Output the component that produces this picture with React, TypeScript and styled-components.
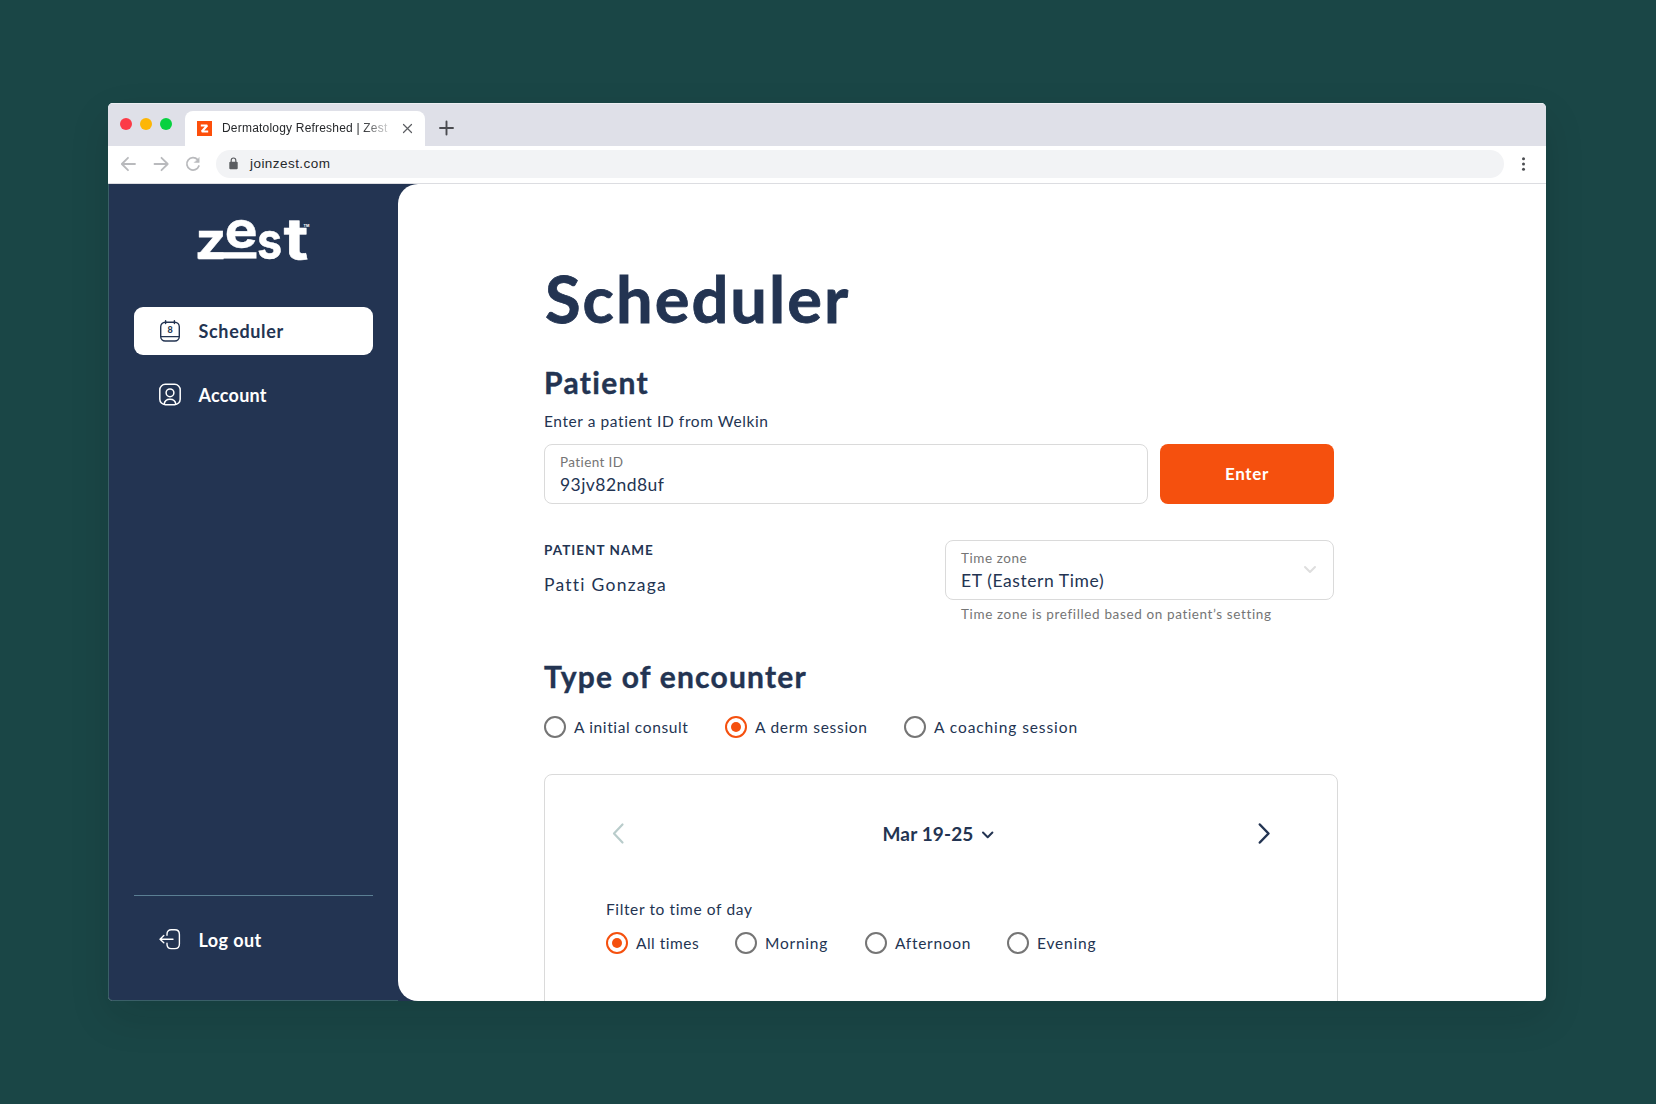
import React, { useState } from 'react';
import styled, { createGlobalStyle } from 'styled-components';

const navy = '#233452';
const orange = '#f5500e';
const line = '#dadada';
const grey = '#757575';

const GlobalStyle = createGlobalStyle`
  * { box-sizing: border-box; }
  body { margin: 0; background: #1a4646; }
  button, input { font: inherit; color: inherit; }
`;

const Page = styled.div`
  height: 1104px;
  padding: 103px 110px 103px 108px;
  background: #1a4646;
  overflow: hidden;
`;

const BrowserWindow = styled.div`
  display: flex;
  flex-direction: column;
  height: 898px;
  border-radius: 5px;
  overflow: hidden;
  background: #fff;
  box-shadow: 0 16px 40px rgba(0, 20, 20, 0.12);
`;

const TabStrip = styled.div`
  flex: none;
  display: flex;
  height: 43px;
  background: #dfe0e8;
  border-top: 1px solid #eceef2;
  font-family: 'Liberation Sans', Arial, sans-serif;
`;

const Lights = styled.div`
  display: flex;
  gap: 8px;
  width: 77px;
  padding: 14px 0 0 12px;
`;

const Light = styled.span<{ $color: string }>`
  width: 12px;
  height: 12px;
  border-radius: 50%;
  background: ${(p) => p.$color};
`;

const Tab = styled.div`
  display: flex;
  align-items: center;
  align-self: flex-end;
  width: 240px;
  height: 35px;
  padding: 0 12px 1px;
  border-radius: 8px 8px 0 0;
  background: #fff;
`;

const Favicon = styled.span`
  display: flex;
  width: 15px;
  height: 15px;
  background: #fd4f0b;
`;

const TabTitle = styled.span`
  width: 168px;
  margin-left: 10px;
  white-space: nowrap;
  font-size: 12px;
  line-height: 18px;
  letter-spacing: 0.2px;
  color: #26282b;
  mask-image: linear-gradient(90deg, #000 84%, rgba(0, 0, 0, 0.2) 100%);
`;

const IconBox = styled.span<{ $left?: number }>`
  display: flex;
  align-items: center;
  margin-left: ${(p) => p.$left ?? 0}px;
`;

const NewTab = styled(IconBox)`
  height: 34px;
  align-self: flex-end;
  margin-bottom: 1px;
`;

const Toolbar = styled.div`
  flex: none;
  display: flex;
  align-items: center;
  height: 38px;
  padding: 0 19px 2px 12px;
  border-bottom: 1px solid #dcdde1;
  font-family: 'Liberation Sans', Arial, sans-serif;
`;

const HistoryButtons = styled.div`
  display: flex;
  align-items: center;
  gap: 16px;
  width: 96px;
`;

const Address = styled.div`
  flex: 1;
  display: flex;
  align-items: center;
  gap: 12px;
  height: 28px;
  padding-left: 13px;
  border-radius: 14px;
  background: #f2f3f5;
  font-size: 13.5px;
  letter-spacing: 0.45px;
  color: #26282b;
`;

const Workspace = styled.div`
  flex: 1;
  min-height: 0;
  display: flex;
  background: ${navy};
  font-family: Lato, 'Open Sans', sans-serif;
`;

const Sidebar = styled.nav`
  flex: none;
  display: flex;
  flex-direction: column;
  width: 290px;
  padding: 34px 25px 0 25px;
  border-left: 1px solid #3a5f68;
  border-bottom: 1px solid #3a5f68;
  border-bottom-left-radius: 5px;
  color: #fff;
`;

const LogoRow = styled.div`
  display: flex;
  padding-left: 63px;
  height: 89px;
`;

const NavItem = styled.button<{ $active?: boolean; $spacing: number }>`
  display: flex;
  align-items: center;
  gap: 17.5px;
  height: 48px;
  margin: 0 0 16px;
  padding: 0 0 0 25px;
  border: 0;
  border-radius: 9px;
  background: ${(p) => (p.$active ? '#fff' : 'transparent')};
  color: ${(p) => (p.$active ? navy : '#fff')};
  font-size: 18px;
  font-weight: 700;
  line-height: 24px;
  letter-spacing: ${(p) => p.$spacing}px;
  text-align: left;
`;

const NavFooter = styled.div`
  display: flex;
  flex-direction: column;
  margin-top: auto;
  height: 105px;
  padding-top: 20px;
  border-top: 1px solid #5b7f94;
`;

const Main = styled.main`
  flex: 1;
  min-width: 0;
  overflow: hidden;
  padding: 75px 212px 0 146px;
  border-radius: 20px 0 0 20px;
  background: #fff;
  color: ${navy};
`;

const Title = styled.h1`
  margin: 0 0 27px 1px;
  font-size: 65px;
  font-weight: 700;
  line-height: 78px;
  letter-spacing: 2.04px;
  -webkit-text-stroke: 0.8px ${navy};
`;

const Heading = styled.h2<{ $after: number; $spacing: number }>`
  margin: 0 0 ${(p) => p.$after}px;
  font-size: 30px;
  font-weight: 700;
  line-height: 36px;
  letter-spacing: ${(p) => p.$spacing}px;
  -webkit-text-stroke: 0.4px ${navy};
`;

const Copy = styled.p<{ $spacing: number }>`
  margin: 0;
  font-size: 15.5px;
  line-height: 20px;
  letter-spacing: ${(p) => p.$spacing}px;
`;

const PatientRow = styled.div`
  display: grid;
  grid-template-columns: 604px 174px;
  gap: 12px;
  margin-top: 13px;
`;

const Field = styled.div`
  display: flex;
  align-items: center;
  justify-content: space-between;
  height: 60px;
  padding: 0 16px 0 15px;
  border: 1px solid ${line};
  border-radius: 8px;
`;

const FieldText = styled.div`
  display: flex;
  flex-direction: column;
  gap: 2px;
`;

const Small = styled.span<{ $spacing: number }>`
  font-size: 13.5px;
  line-height: 18px;
  letter-spacing: ${(p) => p.$spacing}px;
  color: ${grey};
`;

const Value = styled.span<{ $spacing: number }>`
  font-size: 17.5px;
  line-height: 23px;
  letter-spacing: ${(p) => p.$spacing}px;
`;

const EnterButton = styled.button`
  padding: 0 0 1px;
  border: 0;
  border-radius: 8px;
  background: ${orange};
  color: #fff;
  font-size: 17px;
  font-weight: 700;
  letter-spacing: 0.65px;
`;

const DetailRow = styled.div`
  display: grid;
  grid-template-columns: 1fr 389px;
  width: 790px;
  margin: 36px 0 35px;
`;

const Detail = styled.div`
  display: flex;
  flex-direction: column;
  gap: 14px;
  padding-top: 1px;
`;

const DetailLabel = styled.span`
  font-size: 13.5px;
  font-weight: 700;
  line-height: 18px;
  letter-spacing: 1.02px;
`;

const ZoneColumn = styled.div`
  display: flex;
  flex-direction: column;
`;

const Helper = styled(Small)`
  margin: 5px 0 0 16px;
`;

const RadioGroup = styled.div`
  display: flex;
`;

const RadioOption = styled.label<{ $width: number; $spacing: number }>`
  display: flex;
  align-items: center;
  gap: 8px;
  width: ${(p) => p.$width}px;
  height: 22px;
  white-space: nowrap;
  font-size: 15.5px;
  line-height: 22px;
  letter-spacing: ${(p) => p.$spacing}px;
`;

const Radio = styled.input`
  flex: none;
  display: grid;
  place-items: center;
  appearance: none;
  width: 22px;
  height: 22px;
  margin: 0;
  border: 2px solid #757575;
  border-radius: 50%;
  background: #fff;
  &:checked { border-color: ${orange}; }
  &:checked::before {
    content: '';
    width: 10px;
    height: 10px;
    border-radius: 50%;
    background: ${orange};
  }
`;

const Calendar = styled.section`
  width: 794px;
  height: 400px;
  margin-top: 36px;
  padding: 47px 60px 0;
  border: 1px solid ${line};
  border-radius: 8px;
`;

const WeekNav = styled.div`
  display: flex;
  align-items: center;
  justify-content: space-between;
  height: 24px;
  margin-bottom: 53px;
  padding: 0 7px;
`;

const Week = styled.div`
  display: flex;
  align-items: center;
  gap: 8px;
  margin-right: 5px;
  font-size: 19px;
  font-weight: 700;
  line-height: 24px;
  letter-spacing: 0.12px;
`;

const Filter = styled.div`
  display: flex;
  flex-direction: column;
  gap: 13px;
  padding-left: 1px;
`;

const Svg = ({ w, h, sw = 2, color = 'currentColor', children }: {
  w: number; h: number; sw?: number; color?: string; children: React.ReactNode;
}) => (
  <svg width={w} height={h} viewBox={`0 0 ${w} ${h}`} fill="none" stroke={color} strokeWidth={sw}
    strokeLinecap="round" strokeLinejoin="round" overflow="visible">{children}</svg>
);

const Logo = () => (
  <svg width="114" height="42" viewBox="0 0 114 42" fill="#fff" stroke="#fff" strokeWidth="0.4"
    fontFamily="Inter, sans-serif" fontWeight="700" fontSize="50" overflow="visible">
    <text transform="translate(-1.4 40.500) scale(1.08 1.04)">z</text>
    <rect x="0.5" y="34.200" width="59" height="6.400" stroke="none" />
    <text transform="translate(27.800 30.200) scale(1.1 1.04)">e</text>
    <text transform="translate(60 40.500) scale(0.9 1.04)">s</text>
    <text transform="translate(86.500 40.500) scale(1.36 1.12)">t</text>
    <text transform="translate(106.600 8.600)" fontSize="3.600" stroke="none">TM</text>
  </svg>
);

const CalendarIcon = () => (
  <Svg w={22} h={24} sw={1.4}>
    <rect x="1.700" y="3.200" width="18.600" height="18.800" rx="4.500" />
    <path d="M2 17.600h18M6.600 1.600v3M15.400 1.600v3" />
    <text x="11" y="14.400" textAnchor="middle" fontSize="9" fontWeight="900" letterSpacing="0"
      fill="currentColor" stroke="none">8</text>
  </Svg>
);

const AccountIcon = () => (
  <Svg w={22} h={24} sw={1.5}>
    <rect x="0.800" y="1.300" width="20.400" height="20.400" rx="5.500" />
    <circle cx="11" cy="9.800" r="3.900" />
    <path d="M5.200 21.100c.4-3.200 2.600-4.900 5.800-4.900s5.400 1.700 5.800 4.900" />
  </Svg>
);

const LogoutIcon = () => (
  <Svg w={22} h={24} sw={1.4}>
    <path d="M8 7.200V6.200c0-2.600 1.600-4.400 4.200-4.400h3.600c2.700 0 4.600 1.900 4.600 4.600v9.600c0 2.700-1.900 4.600-4.600 4.600h-3.600c-2.600 0-4.200-1.800-4.200-4.400v-1" />
    <path d="M14 11.200H1.200M4.800 7.600l-3.800 3.600 3.800 3.600" />
  </Svg>
);

type Option = { label: string; width: number; spacing: number };

const types: Option[] = [
  { label: 'A initial consult', width: 181, spacing: 0.62 },
  { label: 'A derm session', width: 179, spacing: 0.72 },
  { label: 'A coaching session', width: 190, spacing: 0.91 },
];

const times: Option[] = [
  { label: 'All times', width: 129, spacing: 0.5 },
  { label: 'Morning', width: 130, spacing: 0.77 },
  { label: 'Afternoon', width: 142, spacing: 0.7 },
  { label: 'Evening', width: 100, spacing: 0.8 },
];

function Radios({ name, options, initial }: { name: string; options: Option[]; initial: string }) {
  const [value, setValue] = useState(initial);
  return (
    <RadioGroup role="radiogroup">
      {options.map((o) => (
        <RadioOption key={o.label} $width={o.width} $spacing={o.spacing}>
          <Radio type="radio" name={name} checked={value === o.label} onChange={() => setValue(o.label)} />
          {o.label}
        </RadioOption>
      ))}
    </RadioGroup>
  );
}

function BrowserChrome() {
  return (
    <>
      <TabStrip>
        <Lights>
          <Light $color="#fc3b47" />
          <Light $color="#fdb605" />
          <Light $color="#08d140" />
        </Lights>
        <Tab>
          <Favicon>
            <Svg w={15} h={15} sw={2.2} color="#fff">
              <path d="M3.800 4.500h6.400L4.800 10.500h6.400" strokeLinejoin="bevel" strokeLinecap="butt" />
            </Svg>
          </Favicon>
          <TabTitle>Dermatology Refreshed | Zest</TabTitle>
          <IconBox $left={14}>
            <Svg w={11} h={11} sw={1.2} color="#5c5e62"><path d="M1.500 1.500l8 8M9.500 1.500l-8 8" /></Svg>
          </IconBox>
        </Tab>
        <NewTab $left={14}>
          <Svg w={16} h={16} sw={1.9} color="#4a4b50"><path d="M7.500 1.500v13M1 8h13" /></Svg>
        </NewTab>
      </TabStrip>
      <Toolbar>
        <HistoryButtons>
          <Svg w={17} h={16} sw={1.8} color="#b9babd"><path d="M15 8H2M8 1.800L1.800 8 8 14.200" /></Svg>
          <Svg w={16} h={16} sw={1.8} color="#b9babd"><path d="M1.500 8h13M8.500 1.800L14.700 8l-6.200 6.200" /></Svg>
          <Svg w={16} h={16} sw={1.8} color="#b9babd">
            <path d="M12.600 3.600A6.200 6.200 0 1 0 13.900 10" />
            <path d="M14.200 1.800v4.700H9.500z" fill="#b9babd" strokeWidth="0.500" />
          </Svg>
        </HistoryButtons>
        <Address>
          <svg width="9" height="13" viewBox="0 0 9 13" fill="none" stroke="#5c5e62">
            <rect x="0.300" y="4.800" width="8.400" height="7.400" rx="1" fill="#5c5e62" stroke="none" />
            <path d="M2.200 5V3.300a2.300 2.300 0 0 1 4.600 0V5" strokeWidth="1.200" />
          </svg>
          joinzest.com
        </Address>
        <IconBox $left={17}>
          <svg width="6" height="16" viewBox="0 0 6 16" fill="#4c4e52">
            <circle cx="2.500" cy="2.800" r="1.500" />
            <circle cx="2.500" cy="8" r="1.500" />
            <circle cx="2.500" cy="13.200" r="1.500" />
          </svg>
        </IconBox>
      </Toolbar>
    </>
  );
}

export default function App() {
  return (
    <Page>
      <GlobalStyle />
      <BrowserWindow>
        <BrowserChrome />
        <Workspace>
          <Sidebar>
            <LogoRow><Logo /></LogoRow>
            <NavItem $active $spacing={0.66}><CalendarIcon />Scheduler</NavItem>
            <NavItem $spacing={0.25}><AccountIcon />Account</NavItem>
            <NavFooter>
              <NavItem $spacing={0.41}><LogoutIcon />Log out</NavItem>
            </NavFooter>
          </Sidebar>
          <Main>
            <Title>Scheduler</Title>
            <Heading $after={11} $spacing={1.31}>Patient</Heading>
            <Copy $spacing={0.58}>Enter a patient ID from Welkin</Copy>
            <PatientRow>
              <Field>
                <FieldText>
                  <Small $spacing={0.39}>Patient ID</Small>
                  <Value $spacing={0.45}>93jv82nd8uf</Value>
                </FieldText>
              </Field>
              <EnterButton>Enter</EnterButton>
            </PatientRow>
            <DetailRow>
              <Detail>
                <DetailLabel>PATIENT NAME</DetailLabel>
                <Value $spacing={1.25}>Patti Gonzaga</Value>
              </Detail>
              <ZoneColumn>
                <Field>
                  <FieldText>
                    <Small $spacing={0.56}>Time zone</Small>
                    <Value $spacing={0.58}>ET (Eastern Time)</Value>
                  </FieldText>
                  <Svg w={14} h={9} color="#dedede"><path d="M2 1l5 5 5-5" /></Svg>
                </Field>
                <Helper $spacing={0.63}>Time zone is prefilled based on patient’s setting</Helper>
              </ZoneColumn>
            </DetailRow>
            <Heading $after={22} $spacing={1.22}>Type of encounter</Heading>
            <Radios name="type" options={types} initial="A derm session" />
            <Calendar>
              <WeekNav>
                <Svg w={12} h={22} sw={2.2} color="#b9cccb"><path d="M10.500 1.500L2 10.500l8.500 9" /></Svg>
                <Week>
                  Mar 19-25
                  <Svg w={13} h={9} sw={2}><path d="M2 2.500l4.700 4.700L11.400 2.500" /></Svg>
                </Week>
                <Svg w={12} h={22} sw={2.5}><path d="M1.800 1.500l8.700 9-8.700 9" /></Svg>
              </WeekNav>
              <Filter>
                <Copy $spacing={0.62}>Filter to time of day</Copy>
                <Radios name="time" options={times} initial="All times" />
              </Filter>
            </Calendar>
          </Main>
        </Workspace>
      </BrowserWindow>
    </Page>
  );
}
